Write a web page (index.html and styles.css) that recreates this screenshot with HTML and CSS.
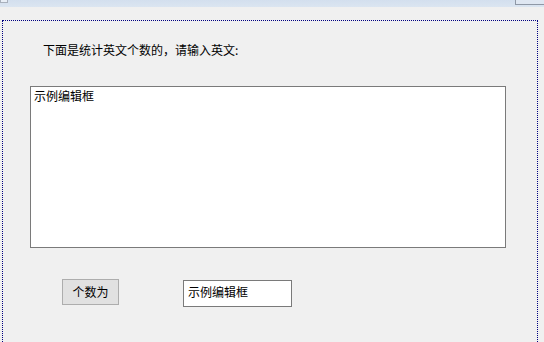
FILE: index.html
```html
<!DOCTYPE html>
<html>
<head>
<meta charset="utf-8">
<link rel="stylesheet" href="styles.css">
</head>
<body>
<div class="topbar">
  <div class="tb-left"></div>
  <div class="tb-right"></div>
</div>
<div class="frame">
  <div class="label">下面是统计英文个数的，请输入英文:</div>
  <div class="editbox">示例编辑框</div>
  <div class="row">
    <div class="btn">个数为</div>
    <div class="smallbox">示例编辑框</div>
  </div>
</div>
</body>
</html>
```
FILE: styles.css
```css
html, body {
  margin: 0;
  padding: 0;
}
body {
  width: 544px;
  height: 342px;
  overflow: hidden;
  background: #f0f0f0;
  font-family: "Noto Sans CJK SC", "Noto Sans", sans-serif;
  font-size: 12px;
  color: #000;
}
.topbar {
  height: 7px;
  background: linear-gradient(#d3dfee, #dbe5f1);
  display: flex;
  align-items: flex-start;
}
.tb-left {
  width: 6px;
  height: 2px;
  border: 1px solid #a8b0bc;
  border-top: none;
  background: #e8eef6;
}
.tb-right {
  margin-left: auto;
  width: 28px;
  height: 4px;
  border-left: 1px solid #8f98a6;
  border-bottom: 1px solid #8f98a6;
  background: #dfe7f2;
}
.frame {
  margin: 13px 0 0 2px;
  width: 534px;
  height: 321px;
  border: 1px dotted #000080;
  border-bottom: none;
  box-sizing: content-box;
}
.label {
  margin: 22px 0 0 40px;
  line-height: 14px;
  height: 14px;
}
.editbox {
  margin: 29px 0 0 27px;
  border: 1px solid #7a7a7a;
  background: #fff;
  padding: 2px 0 0 3px;
  box-sizing: border-box;
  width: 476px;
  height: 162px;
  line-height: 14px;
}
.row {
  display: flex;
  align-items: flex-start;
  margin-top: 31px;
  padding-left: 59px;
  gap: 64px;
}
.btn {
  width: 57px;
  height: 26px;
  box-sizing: border-box;
  border: 1px solid #adadad;
  background: #e1e1e1;
  display: flex;
  align-items: center;
  justify-content: center;
  line-height: 14px;
}
.smallbox {
  margin-top: 1px;
  width: 109px;
  height: 27px;
  box-sizing: border-box;
  border: 1px solid #7a7a7a;
  background: #fff;
  padding: 4px 0 0 4px;
  line-height: 14px;
}
```
